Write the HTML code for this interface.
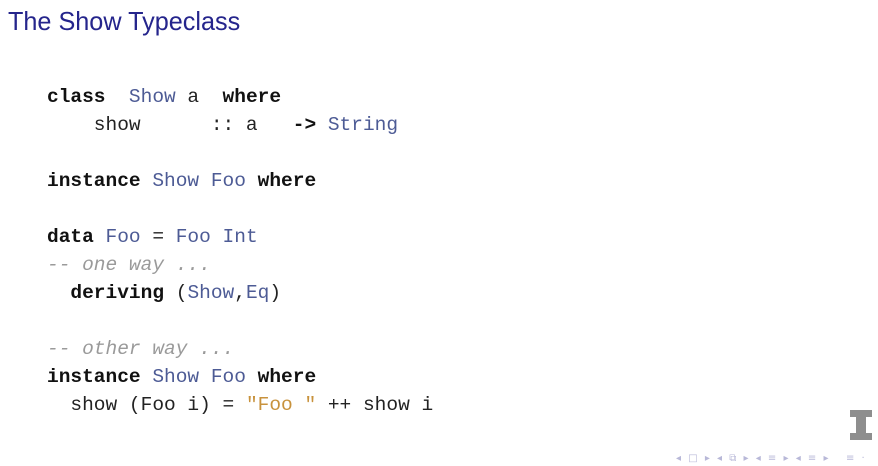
<!DOCTYPE html>
<html><head><style>
body{margin:0;width:878px;height:466px;background:#fff;overflow:hidden;position:relative}
.t{position:absolute;left:8px;top:6px;font:26px "Liberation Sans",sans-serif;color:#25258c;transform:scaleX(0.97);transform-origin:left}
pre{position:absolute;left:47px;top:83px;margin:0;font:19.5px/28px "Liberation Mono",monospace;color:#222}
b{font-weight:bold;color:#111}
.k{color:#4d5b95}
.c{color:#9a9a9a;font-style:italic}
.s{color:#c8923c}
.logo{position:absolute;left:850px;top:410px;width:22px;height:30px}
.nav{position:absolute;left:676px;top:453px;font:10px "DejaVu Sans",sans-serif;color:#b8b8d8;letter-spacing:2px}
</style></head><body>
<div class="t">The Show Typeclass</div>
<pre><b>class</b>  <span class="k">Show</span> a  <b>where</b>
    show      :: a   <b>-&gt;</b> <span class="k">String</span>

<b>instance</b> <span class="k">Show Foo</span> <b>where</b>

<b>data</b> <span class="k">Foo</span> = <span class="k">Foo Int</span>
<span class="c">-- one way ...</span>
  <b>deriving</b> (<span class="k">Show</span>,<span class="k">Eq</span>)

<span class="c">-- other way ...</span>
<b>instance</b> <span class="k">Show Foo</span> <b>where</b>
  show (Foo i) = <span class="s">"Foo "</span> ++ show i</pre>
<svg class="logo" viewBox="0 0 22 30"><path d="M0 0H22V7H16V23H22V30H0V23H6V7H0Z" fill="#8e8e8e"/></svg>
<div class="nav">◂ □ ▸ ◂ ⧉ ▸ ◂ ≡ ▸ ◂ ≡ ▸ &nbsp; ≡ ·</div>
</body></html>
